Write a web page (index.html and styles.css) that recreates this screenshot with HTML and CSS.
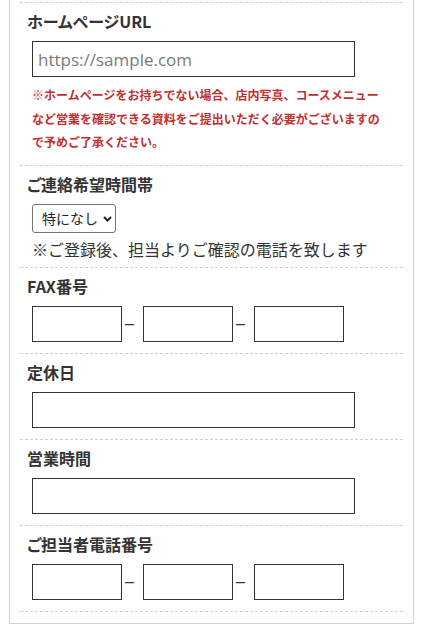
FILE: index.html
```html
<!DOCTYPE html>
<html lang="ja">
<head>
<meta charset="utf-8">
<title>フォーム</title>
<link rel="stylesheet" href="styles.css">
</head>
<body>
<div class="form-box">
  <div class="field">
    <div class="field-title">ホームページURL</div>
    <div class="field-body">
      <input class="text-input wide" type="text" placeholder="https://sample.com">
      <p class="warn">※ホームページをお持ちでない場合、店内写真、コースメニューなど営業を確認できる資料をご提出いただく必要がございますので予めご了承ください。</p>
    </div>
  </div>
  <div class="field field-tight">
    <div class="field-title">ご連絡希望時間帯</div>
    <div class="field-body">
      <span class="select-wrap">
        <select class="select">
          <option>特になし</option>
        </select>
        <svg class="chevron" width="9" height="6" viewBox="0 0 9 6"><path d="M1 1 L4.5 4.5 L8 1" fill="none" stroke="#222" stroke-width="2"/></svg>
      </span>
      <p class="note">※ご登録後、担当よりご確認の電話を致します</p>
    </div>
  </div>
  <div class="field">
    <div class="field-title">FAX番号</div>
    <div class="field-body tel-row">
      <input class="text-input short" type="text"><span class="sep">–</span><input class="text-input short" type="text"><span class="sep">–</span><input class="text-input short" type="text">
    </div>
  </div>
  <div class="field">
    <div class="field-title">定休日</div>
    <div class="field-body">
      <input class="text-input wide" type="text">
    </div>
  </div>
  <div class="field">
    <div class="field-title">営業時間</div>
    <div class="field-body">
      <input class="text-input wide" type="text">
    </div>
  </div>
  <div class="field">
    <div class="field-title">ご担当者電話番号</div>
    <div class="field-body tel-row">
      <input class="text-input short" type="text"><span class="sep">–</span><input class="text-input short" type="text"><span class="sep">–</span><input class="text-input short" type="text">
    </div>
  </div>
</div>
</body>
</html>
```

FILE: styles.css
```css
* { box-sizing: border-box; }
html, body { margin: 0; padding: 0; background: #fff; }
body {
  font-family: "Noto Sans CJK JP", "Noto Sans", sans-serif;
  color: #333;
}
.form-box {
  margin-left: 9px;
  width: 405px;
  border: 1px solid #d2d2d2;
  border-top: none;
  padding: 2px 10px 11px;
}
.field {
  border-top: 1px dashed #cfcfcf;
  padding: 6px 0 11px;
}
.form-box .field:last-child {
  border-bottom: 1px dashed #cfcfcf;
}
.field-tight { padding-bottom: 6px; }
.field-title {
  font-size: 16px;
  line-height: 24px;
  font-weight: bold;
  color: #333;
  padding-left: 7px;
  margin-bottom: 8px;
  font-feature-settings: "palt";
}
.field-body { padding-left: 12px; }
.text-input {
  display: block;
  height: 36px;
  border: 1px solid #333;
  border-radius: 0;
  padding: 0 5px;
  font-family: "Open Sans", sans-serif;
  font-size: 17px;
  color: #333;
  background: #fff;
  margin: 0;
}
.text-input::placeholder { color: #7a7a7a; }
.wide { width: 323px; }
.short { width: 90px; }
.tel-row { display: flex; align-items: center; }
.sep {
  width: 21px;
  padding-left: 3px;
  font-family: "Liberation Sans", sans-serif;
  font-size: 16px;
  color: #333;
  line-height: 1;
}
.warn {
  margin: 6px 0 0;
  width: 358px;
  font-size: 12px;
  line-height: 23.5px;
  font-weight: bold;
  color: #c0302e;
}
.select-wrap {
  position: relative;
  display: inline-block;
  vertical-align: top;
}
.select {
  -webkit-appearance: none;
  appearance: none;
  display: block;
  width: 84px;
  height: 29px;
  border: 1px solid #767676;
  border-radius: 3px;
  background: #fff;
  padding: 0 0 0 9px;
  font-family: "Noto Sans CJK JP", sans-serif;
  font-size: 14px;
  color: #222;
  margin: 0;
}
.chevron {
  position: absolute;
  right: 4px;
  top: 12px;
  pointer-events: none;
}
.note {
  margin: 4px 0 0;
  font-size: 16px;
  line-height: 24px;
  color: #333;
}
```
